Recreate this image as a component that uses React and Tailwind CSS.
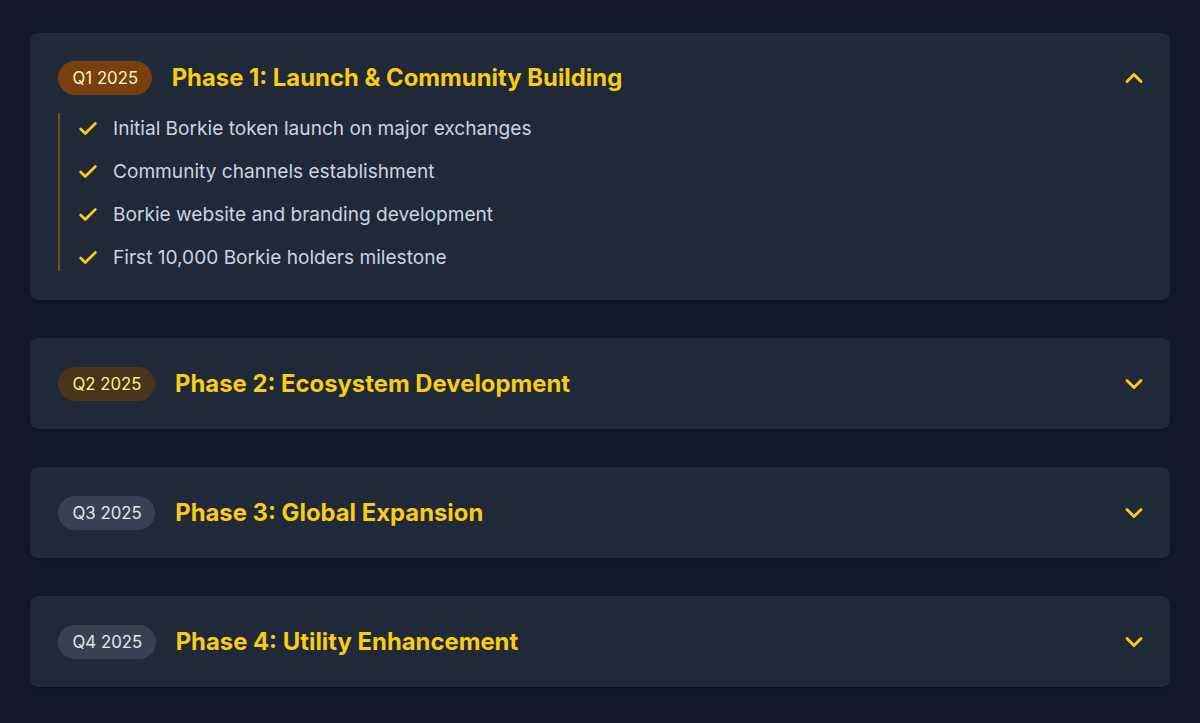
import React from 'react';
import { Check, ChevronUp, ChevronDown } from 'lucide-react';

const PHASES = [
  {
    quarter: 'Q1 2025',
    title: 'Phase 1: Launch & Community Building',
    open: true,
    pill: 'bg-[#78400f] text-[#fef3c7]',
    items: [
      'Initial Borkie token launch on major exchanges',
      'Community channels establishment',
      'Borkie website and branding development',
      'First 10,000 Borkie holders milestone',
    ],
  },
  { quarter: 'Q2 2025', title: 'Phase 2: Ecosystem Development', pill: 'bg-[#4a341c] text-[#fef08a]' },
  { quarter: 'Q3 2025', title: 'Phase 3: Global Expansion', pill: 'bg-[#374151] text-[#e5e7eb]' },
  { quarter: 'Q4 2025', title: 'Phase 4: Utility Enhancement', pill: 'bg-[#374151] text-[#e5e7eb]' },
];

export default function App() {
  return (
    <div className="min-h-[723px] bg-[#111827] px-[30px] pt-[33px] font-['Inter',sans-serif]">
      <div className="flex flex-col gap-[38px]">
        {PHASES.map(p => <PhaseCard key={p.quarter} phase={p} />)}
      </div>
    </div>
  );
}

function PhaseCard({ phase }) {
  const Chevron = phase.open ? ChevronUp : ChevronDown;
  return (
    <div className="rounded-lg bg-[#1f2937] shadow-md">
      <div className={`flex items-center justify-between pl-7 pr-[22px] ${phase.open ? 'pt-7 pb-[18px]' : 'py-7 min-h-[91px]'}`}>
        <div className="flex items-center gap-5">
          <span className={`rounded-full pl-[14.5px] pr-[13.5px] py-[5px] text-[16.8px] leading-6 ${phase.pill}`}>{phase.quarter}</span>
          <h3 className="text-[23.85px] leading-8 font-bold text-[#facc15]">{phase.title}</h3>
        </div>
        <Chevron size={28} strokeWidth={2.5} className="text-[#facc15]" />
      </div>
      {phase.open && (
        <ul className="mx-7 mb-[29px] flex h-[158px] flex-col gap-[14px] border-l-2 border-[#78481f] pl-[17px] pt-px">
          {phase.items.map(item => (
            <li key={item} className="flex items-center gap-3.5 text-[19.1px] leading-[29px] text-[#cbd5e1]">
              <Check size={22} strokeWidth={3} className="text-[#facc15]" />
              {item}
            </li>
          ))}
        </ul>
      )}
    </div>
  );
}
